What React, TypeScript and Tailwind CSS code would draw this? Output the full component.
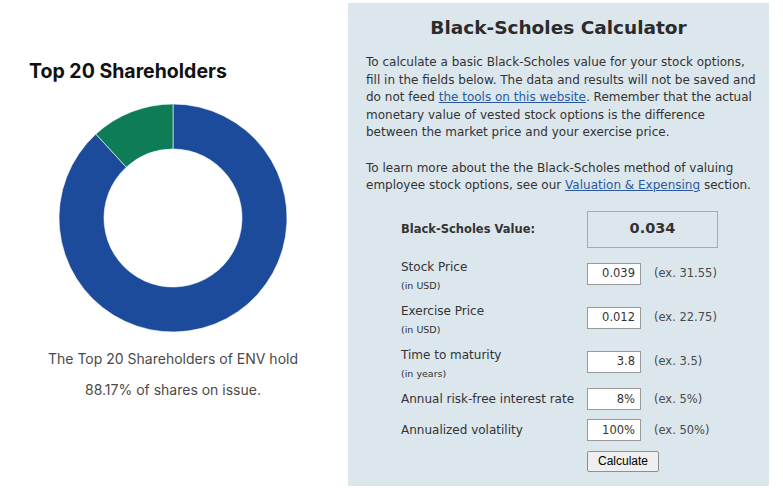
import React from 'react';

const CX = 115;
const CY = 115;
const R_OUT = 114;
const R_IN = 69;

function arcPath(startDeg: number, endDeg: number) {
  // angles measured clockwise from 12 o'clock
  const rad = (d: number) => ((d - 90) * Math.PI) / 180;
  const p = (r: number, d: number) => [CX + r * Math.cos(rad(d)), CY + r * Math.sin(rad(d))];
  const large = endDeg - startDeg > 180 ? 1 : 0;
  const [x1, y1] = p(R_OUT, startDeg);
  const [x2, y2] = p(R_OUT, endDeg);
  const [x3, y3] = p(R_IN, endDeg);
  const [x4, y4] = p(R_IN, startDeg);
  return `M${x1} ${y1} A${R_OUT} ${R_OUT} 0 ${large} 1 ${x2} ${y2} L${x3} ${y3} A${R_IN} ${R_IN} 0 ${large} 0 ${x4} ${y4} Z`;
}

function Donut() {
  const green = 360 * (1 - 0.8817);
  return (
    <svg width="230" height="230" viewBox="0 0 230 230">
      <path d={arcPath(0, 360 - green)} fill="#1d4b9c" stroke="#ffffff" strokeWidth="0.6" />
      <path d={arcPath(360 - green, 359.999)} fill="#0d7c57" stroke="#ffffff" strokeWidth="0.6" />
    </svg>
  );
}

const rows = [
  { label: 'Stock Price', sub: '(in USD)', value: '0.039', hint: '(ex. 31.55)', h: 'h-11' },
  { label: 'Exercise Price', sub: '(in USD)', value: '0.012', hint: '(ex. 22.75)', h: 'h-11' },
  { label: 'Time to maturity', sub: '(in years)', value: '3.8', hint: '(ex. 3.5)', h: 'h-11' },
  { label: 'Annual risk-free interest rate', sub: '', value: '8%', hint: '(ex. 5%)', h: 'h-[31px]' },
  { label: 'Annualized volatility', sub: '', value: '100%', hint: '(ex. 50%)', h: 'h-[31px]' },
];

export default function App() {
  return (
    <div className="flex h-[488px] w-[783px] overflow-hidden bg-white">
      <div className="flex w-[346px] flex-col">
        <h2 className="ml-[29px] mt-[59px] text-[19.5px] font-bold leading-6 text-[#111] [font-family:Inter,'Liberation_Sans',sans-serif]">
          Top 20 Shareholders
        </h2>
        <div className="ml-[58px] mt-[20px]">
          <Donut />
        </div>
        <p className="mt-[10px] text-center text-[14px] leading-[31px] text-[#4a4a4a] [font-family:Inter,'Liberation_Sans',sans-serif]">
          The Top 20 Shareholders of ENV hold
          <br />
          88.17% of shares on issue.
        </p>
      </div>

      <div className="ml-[2px] mt-[3px] h-[483px] w-[421px] bg-[#dce6ed] pl-[18px] pr-[12px] pt-[13px] text-[#333] [font-family:'DejaVu_Sans',Verdana,sans-serif]">
        <h1 className="pr-[6px] text-center text-[18.5px] font-bold leading-6 text-[#2b2b2b]">Black-Scholes Calculator</h1>
        <div className="mt-[14px] text-[12px] leading-[17.6px]">
          <p>
            To calculate a basic Black-Scholes value for your stock options, fill in the fields below. The data and
            results will not be saved and do not feed{' '}
            <a className="text-[#2a5a9c] underline">the tools on this website</a>. Remember that the actual monetary
            value of vested stock options is the difference between the market price and your exercise price.
          </p>
          <p className="mt-[17.6px]">
            To learn more about the the Black-Scholes method of valuing employee stock options, see our{' '}
            <a className="text-[#2a5a9c] underline">Valuation &amp; Expensing</a> section.
          </p>
        </div>

        <div className="ml-[35px] mt-[16px]">
          <div className="flex h-[37px] items-center">
            <div className="w-[186px] text-[11.5px] font-bold">Black-Scholes Value:</div>
            <div className="flex h-[37px] w-[131px] items-center justify-center border border-[#a9a9a9] text-[14.5px] font-bold">
              0.034
            </div>
          </div>
          <div className="mt-[4px]">
            {rows.map((r) => (
              <div key={r.label} className={`flex items-center ${r.h}`}>
                <div className={r.sub ? 'w-[186px] pt-[6px]' : 'w-[186px]'}>
                  <div className="text-[12px] leading-[17px]">{r.label}</div>
                  {r.sub && <div className="mt-[1px] text-[9.5px] leading-[18px]">{r.sub}</div>}
                </div>
                <div className="flex h-[22px] w-[54px] items-center justify-end border border-[#9a9a9a] bg-white pr-[5px] text-[11.5px]">
                  {r.value}
                </div>
                <div className="ml-[13px] text-[11.5px] text-[#4a4a4a]">{r.hint}</div>
              </div>
            ))}
          </div>
          <button className="ml-[186px] mt-[5px] h-[21px] w-[72px] rounded-[2px] border border-[#8f8f8f] bg-[#efefef] text-[12px] text-black [font-family:'Liberation_Sans',Arial,sans-serif]">
            Calculate
          </button>
        </div>
      </div>
    </div>
  );
}
